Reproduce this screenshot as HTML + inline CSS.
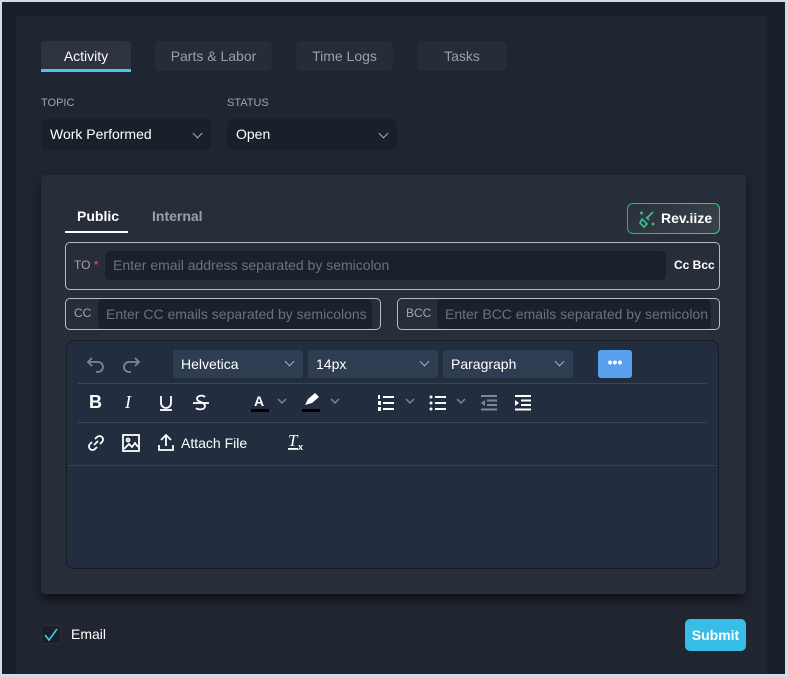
<!DOCTYPE html>
<html><head><meta charset="utf-8"><style>
*{box-sizing:border-box;margin:0;padding:0}
body{width:788px;height:677px;background:#d3dde6;font-family:"Liberation Sans",sans-serif;position:relative;overflow:hidden}
.a{position:absolute}
.frame{left:2px;top:2px;width:783px;height:672px;background:#18202a}
.panel{left:16px;top:16px;width:751px;height:658px;background:#202631}
.tab{height:30px;border-radius:5px;background:#262c38;color:#9aa0a8;font-size:14px;line-height:30px;text-align:center}
.lbl{font-size:11px;color:#a0a6ae}
.sel{height:31px;border-radius:5px;background:#18202a;color:#fff;font-size:14px;line-height:31px;padding-left:9px}
.chev{position:absolute;right:10px;top:11px;width:7px;height:7px;border-right:1.5px solid #aab;border-bottom:1.5px solid #aab;transform:rotate(45deg)}
.card{left:41px;top:175px;width:705px;height:419px;background:#272e3a;border-radius:4px;box-shadow:0 6px 10px rgba(0,0,0,.55)}
.box{border:1px solid #b7bcc2;border-radius:5px}
.inp{background:#1a212b;border-radius:5px;color:#6c727a;font-size:14px;padding-left:8px}
.ed{left:66px;top:340px;width:653px;height:229px;background:#222e3f;border-radius:8px;border:1px solid #151c26}
.tsel{height:28px;border-radius:3px;background:#2e3d52;color:#fff;font-size:14px;line-height:28px;padding-left:8px}
.tsel .chev{top:8px}
.hr{height:1px;background:#3a4656}
svg{position:absolute}
</style></head><body>
<div class="a frame"></div>
<div class="a panel"></div>

<div class="a tab" style="left:41px;top:41px;width:90px;background:#2d3440;color:#fff">Activity</div>
<div class="a" style="left:41px;top:69px;width:90px;height:3px;background:#4fc3ea"></div>
<div class="a tab" style="left:155px;top:41px;width:117px">Parts &amp; Labor</div>
<div class="a tab" style="left:296px;top:41px;width:97px">Time Logs</div>
<div class="a tab" style="left:417px;top:41px;width:90px">Tasks</div>

<div class="a lbl" style="left:41px;top:97px">TOPIC</div>
<div class="a lbl" style="left:227px;top:97px">STATUS</div>
<div class="a sel" style="left:41px;top:119px;width:170px">Work Performed<span class="chev"></span></div>
<div class="a sel" style="left:227px;top:119px;width:170px">Open<span class="chev"></span></div>

<div class="a card"></div>
<div class="a" style="left:77px;top:208px;font-size:14px;font-weight:bold;color:#fff">Public</div>
<div class="a" style="left:65px;top:231px;width:63px;height:2px;background:#fff"></div>
<div class="a" style="left:152px;top:208px;font-size:14px;font-weight:bold;color:#9aa0a8">Internal</div>

<div class="a" style="left:627px;top:203px;width:93px;height:31px;border-radius:6px;padding:1px;background:linear-gradient(90deg,#2a9fd0,#3fd06a)">
 <div style="width:100%;height:100%;border-radius:5px;background:linear-gradient(135deg,#283039,#3a424c);color:#fff;font-weight:bold;font-size:14px;line-height:29px;padding-left:33px">Rev.iize</div>
</div>
<svg style="left:637px;top:209px" width="20" height="20" viewBox="0 0 20 20" fill="none" stroke="#3ec28a" stroke-width="1.6"><path d="M10 9 L16 3"/><path d="M5 10 L10 15 L7 18 L3 14 Z"/><path d="M9 8 L12 11"/><path d="M3 4 h3 M4.5 2.5 v3"/><circle cx="16" cy="15" r=".6"/></svg>

<div class="a box" style="left:65px;top:242px;width:655px;height:48px"></div>
<div class="a" style="left:74px;top:258px;font-size:12px;color:#a0a6ae">TO <span style="color:#e05a5a">*</span></div>
<div class="a inp" style="left:105px;top:251px;width:561px;height:29px;line-height:29px">Enter email address separated by semicolon</div>
<div class="a" style="left:674px;top:258px;font-size:12px;font-weight:bold;color:#fff">Cc Bcc</div>

<div class="a box" style="left:65px;top:298px;width:316px;height:32px"></div>
<div class="a" style="left:74px;top:306px;font-size:12px;color:#a0a6ae">CC</div>
<div class="a inp" style="left:98px;top:299px;width:274px;height:30px;line-height:30px">Enter CC emails separated by semicolons</div>
<div class="a box" style="left:397px;top:298px;width:323px;height:32px"></div>
<div class="a" style="left:406px;top:306px;font-size:12px;color:#a0a6ae">BCC</div>
<div class="a inp" style="left:437px;top:299px;width:274px;height:30px;line-height:30px;white-space:nowrap;overflow:hidden">Enter BCC emails separated by semicolon</div>

<div class="a ed"></div>
<svg style="left:86px;top:355px" width="20" height="18" viewBox="0 0 20 18" fill="none" stroke="#7c8694" stroke-width="1.8"><path d="M6 3 L2 7 L6 11 M2 7 H12 a5 5 0 0 1 0 10 H10"/></svg>
<svg style="left:121px;top:355px" width="20" height="18" viewBox="0 0 20 18" fill="none" stroke="#7c8694" stroke-width="1.8"><path d="M14 3 L18 7 L14 11 M18 7 H8 a5 5 0 0 0 0 10 H10"/></svg>
<div class="a tsel" style="left:173px;top:350px;width:130px">Helvetica<span class="chev"></span></div>
<div class="a tsel" style="left:308px;top:350px;width:130px">14px<span class="chev"></span></div>
<div class="a tsel" style="left:443px;top:350px;width:130px">Paragraph<span class="chev"></span></div>
<div class="a" style="left:598px;top:350px;width:34px;height:28px;border-radius:3px;background:#5aa0ee;color:#fff;text-align:center;font-size:14px;line-height:24px;font-weight:bold">•••</div>
<div class="a hr" style="left:78px;top:383px;width:629px"></div>

<div class="a" style="left:89px;top:392px;font-size:18px;font-weight:bold;color:#fff">B</div>
<div class="a" style="left:125px;top:392px;font-size:18px;font-style:italic;font-family:'Liberation Serif',serif;color:#fff">I</div>
<svg style="left:157px;top:394px" width="18" height="18" viewBox="0 0 18 18" fill="none" stroke="#fff" stroke-width="1.8"><path d="M4 2 V9 a5 5 0 0 0 10 0 V2"/><path d="M3 16 H15"/></svg>
<svg style="left:192px;top:394px" width="18" height="18" viewBox="0 0 18 18" fill="none" stroke="#fff" stroke-width="1.8"><path d="M13 3 C11 1 5 1 5 5 C5 8 13 8 13 12 C13 16 6 16 4 14"/><path d="M1 9 H17"/></svg>
<div class="a" style="left:254px;top:393px;font-size:14px;font-weight:bold;color:#fff">A</div>
<div class="a" style="left:251px;top:409px;width:18px;height:3px;background:#000"></div>
<svg style="left:276px;top:397px" width="12" height="8" viewBox="0 0 12 8" fill="none" stroke="#7c8694" stroke-width="1.5"><path d="M2 2 L6 6 L10 2"/></svg>
<svg style="left:302px;top:393px" width="18" height="14" viewBox="0 0 18 14" fill="#fff"><path d="M3 12 L6 6 L13 0 L17 4 L10 10 Z"/></svg>
<div class="a" style="left:302px;top:409px;width:18px;height:3px;background:#000"></div>
<svg style="left:329px;top:397px" width="12" height="8" viewBox="0 0 12 8" fill="none" stroke="#7c8694" stroke-width="1.5"><path d="M2 2 L6 6 L10 2"/></svg>
<svg style="left:377px;top:395px" width="18" height="16" viewBox="0 0 18 16" fill="#fff"><rect x="6" y="1" width="11" height="2"/><rect x="6" y="7" width="11" height="2"/><rect x="6" y="13" width="11" height="2"/><rect x="1" y="0" width="2" height="4"/><rect x="1" y="6" width="3" height="4"/><rect x="1" y="12" width="3" height="4"/></svg>
<svg style="left:404px;top:397px" width="12" height="8" viewBox="0 0 12 8" fill="none" stroke="#7c8694" stroke-width="1.5"><path d="M2 2 L6 6 L10 2"/></svg>
<svg style="left:429px;top:395px" width="18" height="16" viewBox="0 0 18 16" fill="#fff"><rect x="6" y="1" width="11" height="2"/><rect x="6" y="7" width="11" height="2"/><rect x="6" y="13" width="11" height="2"/><circle cx="2" cy="2" r="1.5"/><circle cx="2" cy="8" r="1.5"/><circle cx="2" cy="14" r="1.5"/></svg>
<svg style="left:455px;top:397px" width="12" height="8" viewBox="0 0 12 8" fill="none" stroke="#7c8694" stroke-width="1.5"><path d="M2 2 L6 6 L10 2"/></svg>
<svg style="left:480px;top:395px" width="18" height="16" viewBox="0 0 18 16" fill="#7c8694"><rect x="1" y="0" width="16" height="2"/><rect x="7" y="4.5" width="10" height="2"/><rect x="7" y="9" width="10" height="2"/><rect x="1" y="13.5" width="16" height="2"/><path d="M5 5 L1 8 L5 11 Z"/></svg>
<svg style="left:514px;top:395px" width="18" height="16" viewBox="0 0 18 16" fill="#fff"><rect x="1" y="0" width="16" height="2"/><rect x="7" y="4.5" width="10" height="2"/><rect x="7" y="9" width="10" height="2"/><rect x="1" y="13.5" width="16" height="2"/><path d="M1 5 L5 8 L1 11 Z"/></svg>
<div class="a hr" style="left:78px;top:422px;width:629px"></div>

<svg style="left:86px;top:433px" width="20" height="20" viewBox="0 0 20 20" fill="none" stroke="#fff" stroke-width="1.8"><path d="M8 12 L12 8"/><path d="M9 6 L11 4 a3 3 0 0 1 5 5 L14 11"/><path d="M11 14 L9 16 a3 3 0 0 1 -5 -5 L6 9"/></svg>
<svg style="left:121px;top:433px" width="20" height="20" viewBox="0 0 20 20" fill="none" stroke="#fff" stroke-width="1.8"><rect x="2" y="2" width="16" height="16"/><circle cx="7" cy="7" r="1.5"/><path d="M3 16 L8 11 L11 14 L14 10 L17 14"/></svg>
<svg style="left:156px;top:432px" width="20" height="20" viewBox="0 0 20 20" fill="none" stroke="#fff" stroke-width="1.8"><path d="M10 14 V3 M5 8 L10 3 L15 8 M3 13 V18 H17 V13"/></svg>
<div class="a" style="left:181px;top:435px;font-size:14px;color:#fff">Attach File</div>
<svg style="left:286px;top:432px" width="22" height="20" viewBox="0 0 22 20"><text x="2" y="14" font-family="Liberation Serif, serif" font-style="italic" font-size="17" fill="#fff">T</text><rect x="2" y="16" width="10" height="1.8" fill="#fff"/><text x="12" y="18" font-family="Liberation Sans, sans-serif" font-size="9" font-weight="bold" fill="#fff">x</text></svg>
<div class="a hr" style="left:67px;top:465px;width:651px;background:#344052"></div>

<div class="a" style="left:41px;top:625px;width:20px;height:19px;border-radius:3px;background:#18202a;border:1px solid #283040"></div>
<svg style="left:44px;top:628px" width="14" height="14" viewBox="0 0 14 14" fill="none" stroke="#4fc3ea" stroke-width="1.6"><path d="M1 7 L5 12 L13 1"/></svg>
<div class="a" style="left:71px;top:626px;font-size:14px;color:#fff">Email</div>
<div class="a" style="left:685px;top:619px;width:61px;height:32px;border-radius:5px;background:#38bde6;color:#fff;font-weight:bold;font-size:14px;text-align:center;line-height:32px">Submit</div>
</body></html>
